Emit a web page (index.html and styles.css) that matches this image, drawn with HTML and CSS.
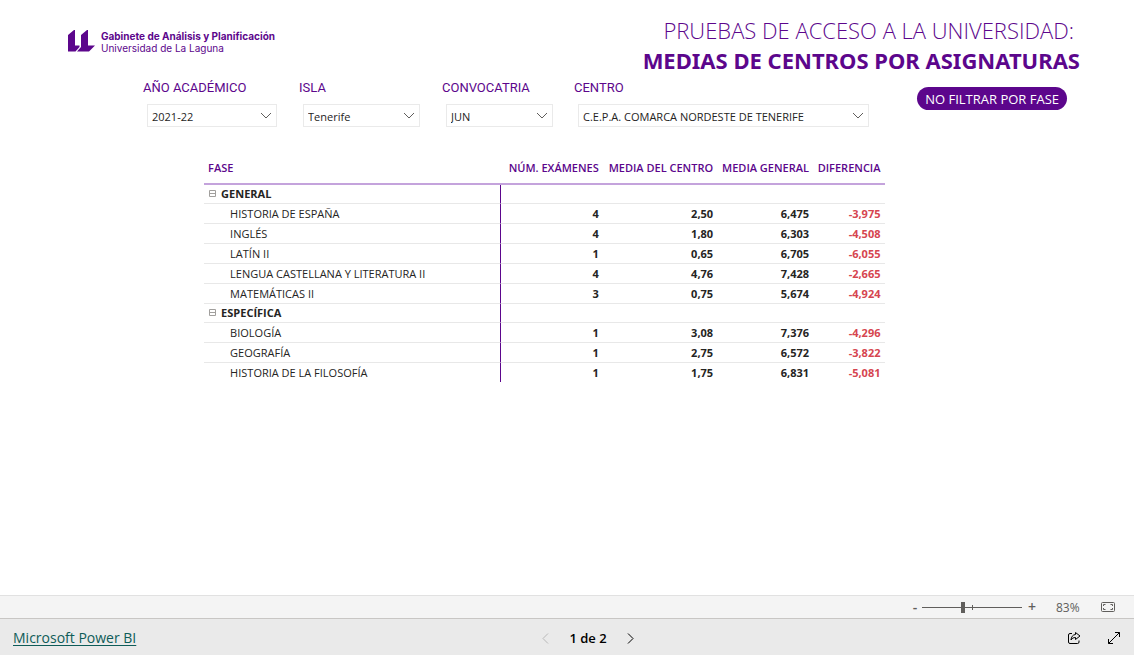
FILE: index.html
```html
<!DOCTYPE html>
<html lang="es">
<head>
<meta charset="utf-8">
<meta name="viewport" content="width=device-width, initial-scale=1">
<title>Pruebas de acceso a la universidad</title>
<link rel="stylesheet" href="styles.css">
</head>
<body>
<main class="report">
  <header class="top">
    <div class="brand">
      <svg class="brand-mark" viewBox="0 0 28 22" aria-hidden="true">
        <path d="M1 5 L7 0 H8 V15.500 H12.500 V17 L8.500 21.500 H1 Z"/>
        <path d="M14 5 L20 0 H21 V15.500 H28 L22 21.500 H10 L14 17 Z"/>
      </svg>
      <div class="brand-text">
        <strong>Gabinete de Análisis y Planificación</strong>
        <span>Universidad de La Laguna</span>
      </div>
    </div>
    <h1 class="title">
      <span class="title-light">PRUEBAS DE ACCESO A LA UNIVERSIDAD:</span>
      <span class="title-bold">MEDIAS DE CENTROS POR ASIGNATURAS</span>
    </h1>
  </header>

  <section class="controls">
    <div class="filter filter-year">
      <label for="year">AÑO ACADÉMICO</label>
      <div class="pick"><select id="year"><option>2021-22</option></select><svg viewBox="0 0 12 7" aria-hidden="true"><path d="M1 1l5 5 5-5"/></svg></div>
    </div>
    <div class="filter filter-island">
      <label for="island">ISLA</label>
      <div class="pick"><select id="island"><option>Tenerife</option></select><svg viewBox="0 0 12 7" aria-hidden="true"><path d="M1 1l5 5 5-5"/></svg></div>
    </div>
    <div class="filter filter-call">
      <label for="call">CONVOCATRIA</label>
      <div class="pick"><select id="call"><option>JUN</option></select><svg viewBox="0 0 12 7" aria-hidden="true"><path d="M1 1l5 5 5-5"/></svg></div>
    </div>
    <div class="filter filter-centre">
      <label for="centre">CENTRO</label>
      <div class="pick"><select id="centre"><option>C.E.P.A. COMARCA NORDESTE DE TENERIFE</option></select><svg viewBox="0 0 12 7" aria-hidden="true"><path d="M1 1l5 5 5-5"/></svg></div>
    </div>
    <button class="pill" type="button">NO FILTRAR POR FASE</button>
  </section>

  <table class="matrix">
    <colgroup><col class="c-name"><col class="c-num"><col class="c-centre"><col class="c-general"><col class="c-diff"></colgroup>
    <thead>
      <tr><th scope="col">FASE</th><th scope="col">NÚM. EXÁMENES</th><th scope="col">MEDIA DEL CENTRO</th><th scope="col">MEDIA GENERAL</th><th scope="col">DIFERENCIA</th></tr>
    </thead>
    <tbody>
      <tr class="group"><th scope="row"><button class="toggle" type="button" aria-label="Contraer GENERAL"><svg viewBox="0 0 7 7" aria-hidden="true"><path d="M.5 .5h6v6h-6zM1 3.500h5"/></svg></button>GENERAL</th><td></td><td></td><td></td><td></td></tr>
      <tr><th scope="row">HISTORIA DE ESPAÑA</th><td>4</td><td>2,50</td><td>6,475</td><td>-3,975</td></tr>
      <tr><th scope="row">INGLÉS</th><td>4</td><td>1,80</td><td>6,303</td><td>-4,508</td></tr>
      <tr><th scope="row">LATÍN II</th><td>1</td><td>0,65</td><td>6,705</td><td>-6,055</td></tr>
      <tr><th scope="row">LENGUA CASTELLANA Y LITERATURA II</th><td>4</td><td>4,76</td><td>7,428</td><td>-2,665</td></tr>
      <tr><th scope="row">MATEMÁTICAS II</th><td>3</td><td>0,75</td><td>5,674</td><td>-4,924</td></tr>
      <tr class="group"><th scope="row"><button class="toggle" type="button" aria-label="Contraer ESPECÍFICA"><svg viewBox="0 0 7 7" aria-hidden="true"><path d="M.5 .5h6v6h-6zM1 3.500h5"/></svg></button>ESPECÍFICA</th><td></td><td></td><td></td><td></td></tr>
      <tr><th scope="row">BIOLOGÍA</th><td>1</td><td>3,08</td><td>7,376</td><td>-4,296</td></tr>
      <tr><th scope="row">GEOGRAFÍA</th><td>1</td><td>2,75</td><td>6,572</td><td>-3,822</td></tr>
      <tr><th scope="row">HISTORIA DE LA FILOSOFÍA</th><td>1</td><td>1,75</td><td>6,831</td><td>-5,081</td></tr>
    </tbody>
  </table>
</main>

<div class="zoombar">
  <button class="zoom-step" type="button" aria-label="Reducir">-</button>
  <input class="zoom-range" type="range" min="0" max="100" value="41" aria-label="Zoom">
  <button class="zoom-step" type="button" aria-label="Ampliar">+</button>
  <span class="zoom-value">83%</span>
  <button class="icon fit" type="button" aria-label="Ajustar a la página">
    <svg viewBox="0 0 14 10" aria-hidden="true"><rect x=".5" y=".5" width="13" height="9" rx="1"/><path d="M4.500 2.500h-2v1.500M9.500 2.500h2v1.500M4.500 7.500h-2v-1.500M9.500 7.500h2v-1.500"/></svg>
  </button>
</div>

<footer class="bottom">
  <a class="product" href="#">Microsoft Power BI</a>
  <nav class="pager" aria-label="Páginas">
    <button class="icon" type="button" disabled aria-label="Página anterior"><svg class="chev" viewBox="0 0 7 11" aria-hidden="true"><path d="M6 .5l-5 5 5 5"/></svg></button>
    <span>1 de 2</span>
    <button class="icon" type="button" aria-label="Página siguiente"><svg class="chev" viewBox="0 0 7 11" aria-hidden="true"><path d="M1 .5l5 5-5 5"/></svg></button>
  </nav>
  <div class="actions">
    <button class="icon" type="button" aria-label="Compartir"><svg class="share" viewBox="0 0 14 14" aria-hidden="true"><path d="M5 2.500H3A1.500 1.500 0 0 0 1.500 4v7A1.500 1.500 0 0 0 3 12.500h7.500a1.500 1.500 0 0 0 1.500-1.500V9.500"/><path d="M8.500 1.500l4.500 3.500-4.500 3.500v-2C6.500 6.500 5 7.300 4 9c.2-3 1.700-5.300 4.500-5.500z"/></svg></button>
    <button class="icon" type="button" aria-label="Pantalla completa"><svg class="expand" viewBox="0 0 14 14" aria-hidden="true"><path d="M1.500 12.500l11-11M8 1.500h4.500V6M1.500 8v4.500H6"/></svg></button>
  </div>
</footer>
</body>
</html>
```
FILE: styles.css
```css
* { box-sizing: border-box; }

body {
  margin: 0;
  min-height: 100vh;
  display: flex;
  flex-direction: column;
  background: #fff;
  color: #252423;
  font-family: "Open Sans", "Noto Sans", sans-serif;
  font-size: 11px;
}

button { border: 0; padding: 0; background: none; font: inherit; color: inherit; }
svg { display: block; fill: none; stroke: currentColor; }

.report { flex: 1; }

.top {
  display: flex;
  justify-content: space-between;
  align-items: flex-start;
  padding: 15px 54px 0 67px;
}

.brand { display: flex; gap: 6px; padding-top: 15px; color: #5c068c; }
.brand-mark { width: 28px; height: 22px; fill: #5c068c; stroke: none; }
.brand-text { display: flex; flex-direction: column; font-family: Inter, sans-serif; font-size: 10px; line-height: 12px; }
.brand-text strong { font-weight: 700; }

.title { margin: 0; color: #5c068c; font-size: 22px; line-height: 30px; text-align: right; }
.title-light, .title-bold { display: block; }
.title-light { padding-right: 6px; font-weight: 300; }
.title-bold { font-family: "Noto Sans", sans-serif; font-weight: 700; }

.controls { display: flex; padding: 4px 67px 0 143px; }
.filter label {
  display: block;
  margin-bottom: 7px;
  color: #5c068c;
  font-family: Roboto, sans-serif;
  font-size: 13px;
  line-height: 18px;
}
.filter-year { width: 156px; }
.filter-island { width: 143px; }
.filter-call { width: 132px; }
.filter-centre { width: 298px; }

.pick { display: grid; align-items: center; margin: 0 22px 0 4px; border: 1px solid #eaeaea; }
.filter-call .pick { margin-right: 21px; }
.filter-centre .pick { margin-right: 3px; }
.pick select, .pick svg { grid-area: 1 / 1; }
.pick select {
  appearance: none;
  width: 100%;
  height: 21px;
  border: 0;
  padding: 2px 20px 0 4px;
  background: none;
  color: #252423;
  font: inherit;
}
.pick svg { justify-self: end; width: 12px; height: 7px; margin-right: 4px; color: #605e5c; pointer-events: none; }

.pill {
  align-self: flex-start;
  margin: 8px 0 0 auto;
  height: 23px;
  padding: 0 8px;
  border-radius: 12px;
  background: #5c068c;
  color: #fff;
  font-size: 13px;
  line-height: 24px;
  white-space: nowrap;
}

.matrix { width: 60%; margin: 25px 0 0 18%; border-collapse: separate; border-spacing: 0; table-layout: fixed; }
.c-name { width: 43.6%; }
.c-num { width: 15%; }
.c-centre { width: 16.8%; }
.c-general { width: 14.1%; }
.c-diff { width: 10.5%; }
.matrix th, .matrix td { padding: 0 4px; text-align: right; white-space: nowrap; }
.matrix th:first-child { text-align: left; }
.matrix thead th { height: 33px; padding-bottom: 0; border-bottom: 2px solid #c4a3dc; color: #5c068c; font-weight: 600; }
.matrix tbody th, .matrix tbody td { height: 20px; border-bottom: 1px solid #e8e8e8; line-height: 19px; }
.matrix tbody th { padding-left: 26px; border-right: 1px solid #5c068c; font-weight: 400; }
.matrix tbody td { font-weight: 700; }
.matrix tbody td:last-child { color: #d64550; }
.matrix .group th, .matrix .group td { height: 19px; line-height: 18px; }
.matrix .group th { padding-left: 5px; font-weight: 700; }
.matrix tbody tr:last-child > * { height: 19px; border-bottom: 0; }
.toggle { margin-right: 5px; color: #a19f9d; vertical-align: 1px; line-height: 8px; }
.toggle svg { width: 7px; height: 7px; }

.zoombar {
  display: flex;
  align-items: center;
  justify-content: flex-end;
  height: 23px;
  padding: 0 19px 0 20px;
  border-top: 1px solid #e1e1e1;
  background: #f4f4f4;
  color: #605e5c;
  font-size: 12px;
}
.zoom-step { width: 8px; font-size: 14px; line-height: 20px; font-weight: 600; }
.zoom-range {
  appearance: none;
  width: 100px;
  height: 12px;
  margin: 0 6px 0 3px;
  background:
    linear-gradient(#605e5c, #605e5c) 50px 4px / 1px 5px no-repeat,
    linear-gradient(#605e5c, #605e5c) 0 6px / 100% 1px no-repeat;
}
.zoom-range::-webkit-slider-thumb { appearance: none; width: 4px; height: 11px; background: #605e5c; }
.zoom-value { width: 65px; padding-left: 20px; }
.fit svg { width: 14px; height: 10px; }

.bottom {
  display: grid;
  grid-template-columns: 1fr auto 1fr;
  align-items: center;
  height: 37px;
  padding: 2px 13px 0 13px;
  border-top: 1px solid #c8c6c4;
  background: #eaeaea;
}
.product { justify-self: start; color: #0e5c58; font-size: 14px; line-height: 20px; text-underline-offset: 2px; }
.pager { display: flex; align-items: center; gap: 20px; margin-right: -42px; color: #000; font-size: 13px; font-weight: 600; }
.pager .icon:disabled { color: #b8b8b8; }
.chev { width: 7px; height: 11px; }
.actions { display: flex; justify-content: flex-end; gap: 26px; color: #000; }
.share, .expand { width: 14px; height: 14px; }
```
